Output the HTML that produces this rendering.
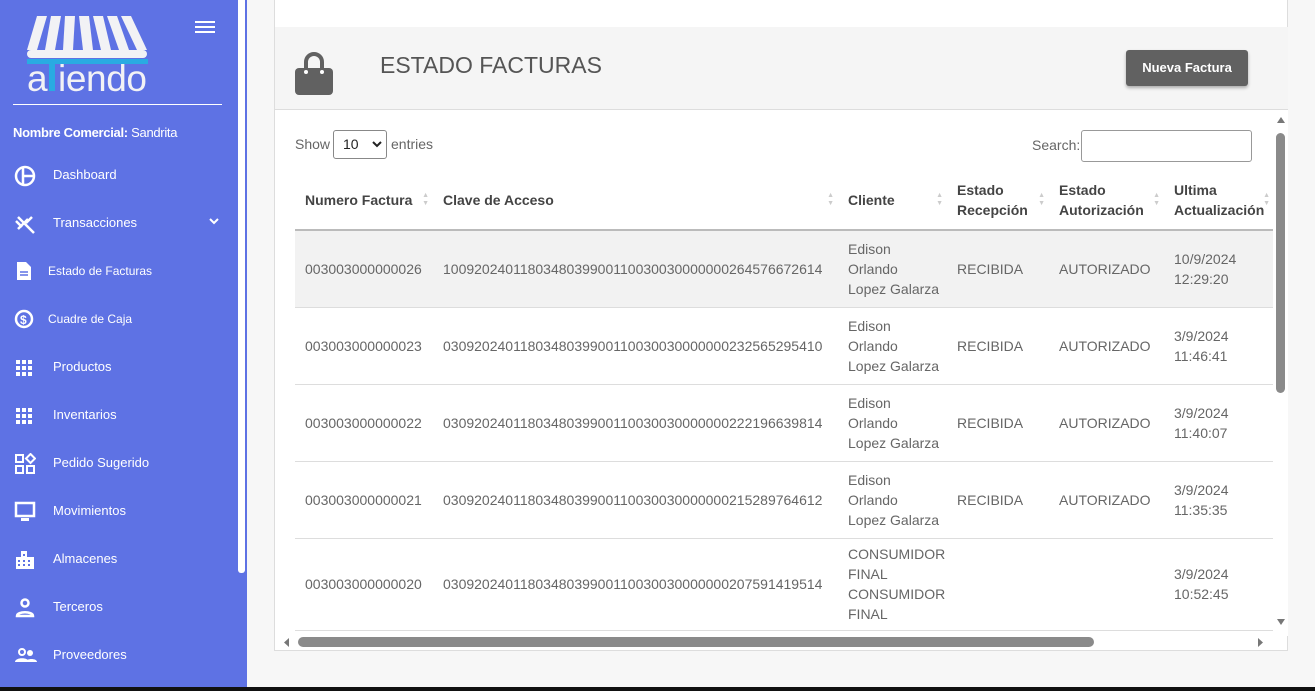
<!DOCTYPE html>
<html><head><meta charset="utf-8"><style>
*{box-sizing:border-box;margin:0;padding:0}
body{width:1315px;height:691px;overflow:hidden;background:#f7f7f7;font-family:"Liberation Sans",sans-serif;position:relative}
#sb{position:absolute;left:0;top:0;width:247px;height:687px;background:#5e72e4;color:#fff}
#sbscroll{position:absolute;left:238px;top:0;width:7px;height:573px;background:#fff;border-radius:0 0 3px 3px}
#sbline{position:absolute;left:13px;top:104px;width:209px;height:1px;background:#fff}
.nc{position:absolute;left:13px;top:125px;font-size:13px;letter-spacing:-0.3px}
.it{position:absolute;left:0;font-size:13px;height:20px;line-height:20px}
.it svg{position:absolute;left:14px;top:0}
.it span{position:absolute;left:53px;white-space:nowrap}
#bottom{position:absolute;left:0;top:687px;width:1315px;height:4px;background:#111}
#card{position:absolute;left:274px;top:0;width:1014px;height:651px;background:#fff;border:1px solid #ddd;border-top:none}
#hdr{position:absolute;left:0;top:27px;width:1013px;height:83px;background:#f5f5f5;border-bottom:1px solid #ddd}
#title{position:absolute;left:105px;top:25px;font-size:23px;color:#555}
#btn{position:absolute;left:851px;top:23px;width:122px;height:36px;background:#616161;color:#fff;font-size:13px;font-weight:bold;text-align:center;line-height:36px;border-radius:3px;box-shadow:0 2px 3px rgba(0,0,0,.3)}
.c{color:#666;font-size:14px}
table{position:absolute;left:20px;top:170px;border-collapse:collapse;font-size:14px;color:#666;table-layout:fixed;width:1000px}
th{font-weight:bold;color:#444;text-align:left;padding:0 10px;height:60px;border-bottom:2px solid #bbb;vertical-align:middle;line-height:20px;position:relative}
td{padding:0 10px;height:77px;border-bottom:1px solid #ddd;line-height:20px;vertical-align:middle;white-space:nowrap;overflow:visible}
tr.g td{background:#f2f2f2}
.ar{position:absolute;right:4px;top:22px;font-size:7px;color:#ccc;line-height:8px}
</style></head><body>
<div id="sb">
<svg style="position:absolute;left:27px;top:14px" width="122" height="80" viewBox="0 0 122 80">
<g fill="#f2f2f5"><polygon points="10,2 20,2 10,36 0,36"/><polygon points="24,2 34,2 28,36 18,36"/><polygon points="38,2 48,2 46,36 36,36"/><polygon points="52,2 62,2 66,36 56,36"/><polygon points="66,2 76,2 84,36 74,36"/><polygon points="80,2 90,2 102,36 92,36"/><polygon points="94,2 104,2 120,36 110,36"/>
<rect x="0" y="36" width="120" height="8" rx="4"/></g>
<rect x="0" y="45" width="121" height="5" fill="#29abe2"/>
<text x="0" y="77" font-size="37" fill="#f2f2f5" font-family="Liberation Sans">a</text>
<rect x="22" y="50" width="6" height="27" fill="#29abe2"/>
<text x="31" y="77" font-size="37" fill="#f2f2f5" font-family="Liberation Sans" textLength="89">iendo</text>
</svg>
<svg style="position:absolute;left:195px;top:20px" width="20" height="14"><g fill="#fff"><rect y="1" width="20" height="2"/><rect y="6" width="20" height="2"/><rect y="11" width="20" height="2"/></g></svg>
<div id="sbline"></div>
<div class="nc"><b>Nombre Comercial:</b> Sandrita</div>
<div class="it" style="top:165px"><svg width="22" height="22"><circle cx="11" cy="11" r="9" fill="none" stroke="#fff" stroke-width="2.5"/><path d="M9 2v18M9 11h10" stroke="#fff" stroke-width="2.5"/></svg><span>Dashboard</span></div>
<div class="it" style="top:213px"><svg width="24" height="22"><path d="M2 8l6 6M6 6l10 10M14 6l-10 10M18 4l-6 6M4 4l16 16" stroke="#fff" stroke-width="2.5"/></svg><span>Transacciones</span><svg style="left:208px;top:4px" width="12" height="10"><path d="M2 2l4 4 4-4" stroke="#fff" stroke-width="2" fill="none"/></svg></div>
<div class="it" style="top:261px;font-size:12px"><svg width="20" height="20"><path d="M3 1h9l5 5v13H3z" fill="#fff"/><path d="M6 11h8M6 14h8" stroke="#5e72e4" stroke-width="1.5"/></svg><span style="left:48px">Estado de Facturas</span></div>
<div class="it" style="top:309px;font-size:12px"><svg width="20" height="20"><circle cx="10" cy="10" r="8" fill="none" stroke="#fff" stroke-width="2.5"/><text x="6" y="15" font-size="12" fill="#fff" font-weight="bold">$</text></svg><span style="left:48px">Cuadre de Caja</span></div>
<div class="it" style="top:357px"><svg width="20" height="20"><g fill="#fff"><rect x="2" y="3" width="4" height="4"/><rect x="8" y="3" width="4" height="4"/><rect x="14" y="3" width="4" height="4"/><rect x="2" y="9" width="4" height="4"/><rect x="8" y="9" width="4" height="4"/><rect x="14" y="9" width="4" height="4"/><rect x="2" y="15" width="4" height="4"/><rect x="8" y="15" width="4" height="4"/><rect x="14" y="15" width="4" height="4"/></g></svg><span>Productos</span></div>
<div class="it" style="top:405px"><svg width="20" height="20"><g fill="#fff"><rect x="2" y="3" width="4" height="4"/><rect x="8" y="3" width="4" height="4"/><rect x="14" y="3" width="4" height="4"/><rect x="2" y="9" width="4" height="4"/><rect x="8" y="9" width="4" height="4"/><rect x="14" y="9" width="4" height="4"/><rect x="2" y="15" width="4" height="4"/><rect x="8" y="15" width="4" height="4"/><rect x="14" y="15" width="4" height="4"/></g></svg><span>Inventarios</span></div>
<div class="it" style="top:453px"><svg width="22" height="22"><g fill="none" stroke="#fff" stroke-width="2"><rect x="2" y="2" width="7" height="7"/><rect x="2" y="13" width="7" height="7"/><rect x="13" y="13" width="7" height="7"/><path d="M16.5 1l4.5 4.5-4.5 4.5-4.5-4.5z"/></g></svg><span>Pedido Sugerido</span></div>
<div class="it" style="top:501px"><svg width="22" height="22"><rect x="2" y="2" width="18" height="13" fill="none" stroke="#fff" stroke-width="2.5"/><rect x="7" y="17" width="8" height="3" fill="#fff"/></svg><span>Movimientos</span></div>
<div class="it" style="top:549px"><svg width="22" height="22"><path d="M2 20V8h5V2h6v6h7v12z" fill="#fff"/><g fill="#5e72e4"><rect x="4" y="11" width="2" height="2"/><rect x="9" y="5" width="2" height="2"/><rect x="9" y="11" width="2" height="2"/><rect x="14" y="11" width="2" height="2"/><rect x="4" y="15" width="2" height="2"/><rect x="9" y="15" width="2" height="2"/><rect x="14" y="15" width="2" height="2"/></g></svg><span>Almacenes</span></div>
<div class="it" style="top:597px"><svg width="22" height="22"><circle cx="11" cy="6" r="3.5" fill="none" stroke="#fff" stroke-width="2.5"/><path d="M3 19c0-5 16-5 16 0z" fill="none" stroke="#fff" stroke-width="2.5"/></svg><span>Terceros</span></div>
<div class="it" style="top:645px"><svg width="24" height="22"><circle cx="8" cy="7" r="3" fill="none" stroke="#fff" stroke-width="2"/><circle cx="16" cy="8" r="3" fill="#fff"/><path d="M1 17c0-5 14-5 14 0zM12 17c0-4 11-4 11 0z" fill="#fff"/></svg><span>Proveedores</span></div>
<div id="sbscroll"></div>
</div>
<div id="card">
<div id="hdr">
<svg style="position:absolute;left:20px;top:25px" width="38" height="43" viewBox="0 0 38 43"><path d="M11 16V10a8 8 0 0 1 16 0v6" fill="none" stroke="#616161" stroke-width="4"/><rect x="0" y="16" width="38" height="27" rx="4" fill="#616161"/><circle cx="11" cy="20" r="2" fill="#fff"/><circle cx="27" cy="20" r="2" fill="#fff"/></svg>
<div id="title">ESTADO FACTURAS</div>
<div id="btn">Nueva Factura</div>
</div>
<div class="c" style="position:absolute;left:20px;top:136px">Show</div>
<div style="position:absolute;left:58px;top:130px;width:54px;height:29px;border:1px solid #888;border-radius:3px;font-size:14px;line-height:27px;padding-left:9px;color:#222">10<svg style="position:absolute;right:4px;top:10px" width="10" height="8"><path d="M1 1l4 4 4-4" stroke="#222" stroke-width="2" fill="none"/></svg></div>
<div class="c" style="position:absolute;left:116px;top:136px">entries</div>
<div class="c" style="position:absolute;left:757px;top:137px">Search:</div>
<div style="position:absolute;left:806px;top:130px;width:171px;height:32px;border:1px solid #999;border-radius:3px"></div>
<div style="position:absolute;left:0;top:110px;width:998px;height:526px;overflow:hidden">
<table style="left:20px;top:60px">
<colgroup><col style="width:138px"><col style="width:405px"><col style="width:109px"><col style="width:102px"><col style="width:115px"><col style="width:131px"></colgroup>
<tr><th>Numero Factura<span class="ar">▲<br>▼</span></th><th>Clave de Acceso<span class="ar">▲<br>▼</span></th><th>Cliente<span class="ar">▲<br>▼</span></th><th>Estado<br>Recepción<span class="ar">▲<br>▼</span></th><th>Estado<br>Autorización<span class="ar">▲<br>▼</span></th><th>Ultima<br>Actualización<span class="ar" style="right:25px">▲<br>▼</span></th></tr>
<tr class="g"><td>003003000000026</td><td>1009202401180348039900110030030000000264576672614</td><td>Edison<br>Orlando<br>Lopez Galarza</td><td>RECIBIDA</td><td>AUTORIZADO</td><td>10/9/2024<br>12:29:20</td></tr>
<tr><td>003003000000023</td><td>0309202401180348039900110030030000000232565295410</td><td>Edison<br>Orlando<br>Lopez Galarza</td><td>RECIBIDA</td><td>AUTORIZADO</td><td>3/9/2024<br>11:46:41</td></tr>
<tr><td>003003000000022</td><td>0309202401180348039900110030030000000222196639814</td><td>Edison<br>Orlando<br>Lopez Galarza</td><td>RECIBIDA</td><td>AUTORIZADO</td><td>3/9/2024<br>11:40:07</td></tr>
<tr><td>003003000000021</td><td>0309202401180348039900110030030000000215289764612</td><td>Edison<br>Orlando<br>Lopez Galarza</td><td>RECIBIDA</td><td>AUTORIZADO</td><td>3/9/2024<br>11:35:35</td></tr>
<tr><td style="height:92px">003003000000020</td><td>0309202401180348039900110030030000000207591419514</td><td>CONSUMIDOR<br>FINAL<br>CONSUMIDOR<br>FINAL</td><td></td><td></td><td>3/9/2024<br>10:52:45</td></tr>
</table></div>
<div style="position:absolute;left:998px;top:110px;width:15px;height:526px;background:#fff"></div>
<svg style="position:absolute;left:1001px;top:115px" width="10" height="10"><path d="M1 8h8L5 2z" fill="#777"/></svg>
<div style="position:absolute;left:1001px;top:133px;width:9px;height:260px;background:#8a8a8a;border-radius:5px"></div>
<svg style="position:absolute;left:1001px;top:617px" width="10" height="10"><path d="M1 2h8L5 8z" fill="#777"/></svg>
<svg style="position:absolute;left:7px;top:637px" width="10" height="12"><path d="M7 1v9L2 5.5z" fill="#777"/></svg>
<div style="position:absolute;left:23px;top:637px;width:796px;height:10px;background:#8a8a8a;border-radius:5px"></div>
<svg style="position:absolute;left:981px;top:637px" width="10" height="12"><path d="M2 1v9l5-4.5z" fill="#777"/></svg>
</div>
<div id="bottom"></div>
</body></html>
